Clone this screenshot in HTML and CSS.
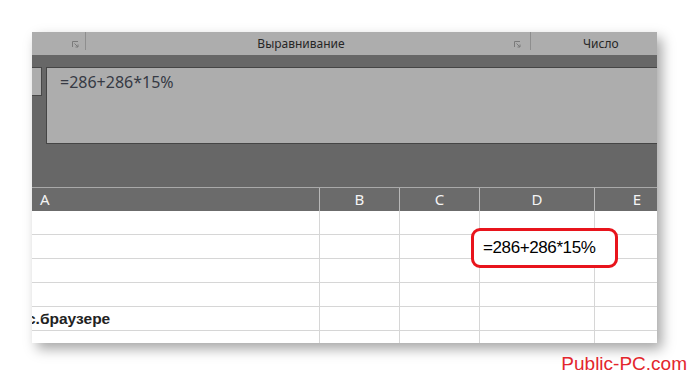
FILE: index.html
```html
<!DOCTYPE html>
<html lang="ru">
<head>
  <meta charset="UTF-8" />
  <title>Формула в ячейке</title>
  <link rel="stylesheet" href="styles.css">
</head>
<body>
  <div class="shot">
    <div class="ribbon">
      <div class="group group-first">
        <svg class="launcher" width="7" height="7" viewBox="0 0 7 7"><path d="M0.5 6V0.5H6" fill="none" stroke="#7a7a7a"/><path d="M2.5 2.5L6 6M3.5 6H6V3.5" fill="none" stroke="#7a7a7a"/></svg>
      </div>
      <div class="sep"></div>
      <div class="group group-align">
        <span class="group-label">Выравнивание</span>
        <svg class="launcher" width="7" height="7" viewBox="0 0 7 7"><path d="M0.5 6V0.5H6" fill="none" stroke="#7a7a7a"/><path d="M2.5 2.5L6 6M3.5 6H6V3.5" fill="none" stroke="#7a7a7a"/></svg>
      </div>
      <div class="sep"></div>
      <div class="group group-number">
        <span class="group-label">Число</span>
      </div>
    </div>

    <div class="formula-area">
      <div class="formula-row">
        <div class="name-box"></div>
        <div class="formula-box">=286+286*15%</div>
      </div>
    </div>

    <div class="sheet">
      <div class="row head">
        <div class="cell col-a">A</div>
        <div class="cell col-b">B</div>
        <div class="cell col-c">C</div>
        <div class="cell col-d">D</div>
        <div class="cell col-e">E</div>
      </div>
      <div class="row">
        <div class="cell col-a"></div><div class="cell col-b"></div><div class="cell col-c"></div><div class="cell col-d"></div><div class="cell col-e"></div>
      </div>
      <div class="row">
        <div class="cell col-a"></div><div class="cell col-b"></div><div class="cell col-c"></div>
        <div class="cell col-d editing">
          <div class="editor">=286+286*15%</div>
        </div>
        <div class="cell col-e"></div>
      </div>
      <div class="row">
        <div class="cell col-a"></div><div class="cell col-b"></div><div class="cell col-c"></div><div class="cell col-d"></div><div class="cell col-e"></div>
      </div>
      <div class="row">
        <div class="cell col-a"></div><div class="cell col-b"></div><div class="cell col-c"></div><div class="cell col-d"></div><div class="cell col-e"></div>
      </div>
      <div class="row">
        <div class="cell col-a bold"><span class="clip">с.браузере</span></div><div class="cell col-b"></div><div class="cell col-c"></div><div class="cell col-d"></div><div class="cell col-e"></div>
      </div>
      <div class="row">
        <div class="cell col-a"></div><div class="cell col-b"></div><div class="cell col-c"></div><div class="cell col-d"></div><div class="cell col-e"></div>
      </div>
    </div>
  </div>

  <div class="watermark">Public-PC.com</div>
</body>
</html>
```

FILE: styles.css
```css
:root {
  --ribbon: #adadad;
  --dark: #676767;
  --grid: #d6d6d6;
  --red: #e8141c;
}

* {
  box-sizing: border-box;
  margin: 0;
  padding: 0;
}

body {
  background: #ffffff;
  padding: 32px 33px 0 32px;
  font-family: 'Noto Sans', 'Open Sans', sans-serif;
  color: #222;
}

.shot {
  height: 311px;
  overflow: hidden;
  background: var(--dark);
  box-shadow: 5px 6px 12px rgba(0, 0, 0, 0.35);
}

/* ribbon strip */
.ribbon {
  display: flex;
  align-items: flex-start;
  height: 23px;
  background: var(--ribbon);
}

.group {
  display: flex;
  align-items: center;
  height: 23px;
}

.group-first {
  width: 53px;
  justify-content: flex-end;
  padding-right: 6px;
}

.group-align {
  width: 444px;
  padding-right: 9px;
}

.group-align .group-label {
  flex: 1;
  text-align: center;
  padding-left: 2px;
}

.group-number {
  flex: 1;
  padding-left: 52px;
}

.group-label {
  font-size: 12px;
  color: #262626;
}

.launcher {
  display: block;
  margin-top: 2px;
}

.sep {
  width: 1px;
  height: 18px;
  background: #8e8e8e;
}

/* formula bar */
.formula-area {
  height: 132px;
  padding-top: 12px;
  background: var(--dark);
}

.formula-row {
  display: flex;
  align-items: flex-start;
  gap: 4px;
}

.name-box {
  width: 10px;
  height: 29px;
  background: var(--ribbon);
  border: 1px solid #474747;
  border-left: none;
}

.formula-box {
  flex: 1;
  height: 77px;
  background: var(--ribbon);
  border: 1px solid #454545;
  border-right: none;
  padding: 3px 0 0 13px;
  font-size: 16px;
  color: #363a44;
}

/* sheet grid */
.sheet {
  background: #ffffff;
  border-top: 1px solid #a9a9a9;
}

.row {
  display: flex;
  height: 24px;
  border-bottom: 1px solid var(--grid);
}

.row.head {
  height: 23px;
  background: #6b6b6b;
  border-bottom: none;
}

.cell {
  border-right: 1px solid var(--grid);
  font-family: 'Liberation Sans', Arial, sans-serif;
  font-size: 15px;
}

.head .cell {
  border-right-color: #b8b8b8;
  color: #f4f4f4;
  font-family: 'Noto Sans', sans-serif;
  font-size: 15px;
  line-height: 23px;
  text-align: center;
}

.head .col-a {
  text-align: left;
  padding-left: 8px;
}

.head .col-e {
  padding-left: 22px;
}

.col-a { width: 288px; }
.col-b { width: 80px; }
.col-c { width: 80px; }
.col-d { width: 115px; }
.col-e { flex: 1; border-right: none; }

.bold {
  font-weight: bold;
  font-size: 15.5px;
  overflow: hidden;
  white-space: nowrap;
  line-height: 23px;
}

.clip {
  display: inline-block;
  margin-left: -5px;
}

.editing {
  position: relative;
}

.editor {
  position: absolute;
  left: -9px;
  top: -7px;
  width: 147px;
  height: 40px;
  background: #ffffff;
  border: 3px solid var(--red);
  border-radius: 9px;
  padding: 7px 0 0 9px;
  font-family: 'Liberation Sans', Arial, sans-serif;
  font-size: 17px;
  letter-spacing: -0.4px;
  color: #000;
  z-index: 2;
}

/* site mark */
.watermark {
  margin: 10px -30px 0 0;
  text-align: right;
  font-family: 'Liberation Sans', Arial, sans-serif;
  font-size: 19px;
  color: #e3262d;
}
```
